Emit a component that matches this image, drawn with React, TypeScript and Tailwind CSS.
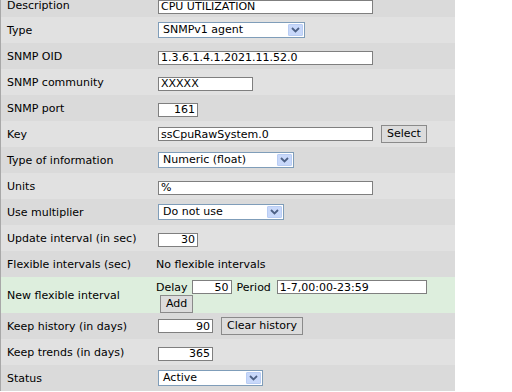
import React from "react"

const font = "font-['DejaVu_Sans',sans-serif]"

function TextBox({ value, w, right }: { value: string; w: string; right?: boolean }) {
  return (
    <input
      readOnly
      value={value}
      className={`${w} h-[14px] border border-[#7f7f7f] bg-white px-[2px] text-[11px] leading-[12px] text-black outline-none ${right ? "text-right" : ""}`}
    />
  )
}

function Dropdown({ value, w }: { value: string; w: string }) {
  return (
    <div className={`${w} flex h-[16px] items-center border border-[#7f9db9] bg-white`}>
      <span className="flex-1 pl-[4px] text-[11px] leading-[14px]">{value}</span>
      <span className="mr-[1px] flex h-[12px] w-[15px] items-center justify-center rounded-[1px] border border-[#b9cdf4] bg-[#c8d8fa]">
        <svg width="9" height="6" viewBox="0 0 9 6">
          <path d="M1 1 L4.5 4.5 L8 1" fill="none" stroke="#4d6185" strokeWidth="1.8" />
        </svg>
      </span>
    </div>
  )
}

function Btn({ label }: { label: string }) {
  return (
    <span className="inline-flex h-[18px] items-center border border-[#8a8a8a] bg-[#dcdcdc] px-[5px] text-[11px] leading-[14px]">
      {label}
    </span>
  )
}

function Row({ label, dark, children, h = "h-[26px]", green }: { label: string; dark?: boolean; children: React.ReactNode; h?: string; green?: boolean }) {
  const bg = green ? "bg-[#ddeedd]" : dark ? "bg-[#dadada]" : "bg-[#e1e1e1]"
  return (
    <div className={`flex ${h} items-center ${bg}`}>
      <div className="w-[155px] shrink-0 pl-[6px] pt-[3px] text-[11px]">{label}</div>
      <div className="flex flex-1 items-center">{children}</div>
    </div>
  )
}

export default function App() {
  return (
    <div className={`${font} h-[392px] w-[512px] overflow-hidden bg-white text-black`}>
      <div className="-mt-[7px] w-[455px] border-l border-[#a8a8a8]">
        <Row label="Description" dark h="h-[24px]">
          <span className="pl-[2px]"><TextBox value="CPU UTILIZATION" w="w-[215px]" /></span>
        </Row>
        <Row label="Type">
          <span className="pl-[2px]"><Dropdown value="SNMPv1 agent" w="w-[147px]" /></span>
        </Row>
        <Row label="SNMP OID" dark>
          <span className="pl-[2px]"><TextBox value="1.3.6.1.4.1.2021.11.52.0" w="w-[215px]" /></span>
        </Row>
        <Row label="SNMP community">
          <span className="pl-[2px]"><TextBox value="XXXXX" w="w-[95px]" /></span>
        </Row>
        <Row label="SNMP port" dark>
          <span className="pl-[2px]"><TextBox value="161" w="w-[40px]" right /></span>
        </Row>
        <Row label="Key">
          <span className="flex items-center gap-[8px] pl-[2px]">
            <TextBox value="ssCpuRawSystem.0" w="w-[215px]" />
            <Btn label="Select" />
          </span>
        </Row>
        <Row label="Type of information" dark>
          <span className="pl-[2px]"><Dropdown value="Numeric (float)" w="w-[136px]" /></span>
        </Row>
        <Row label="Units">
          <span className="pl-[2px]"><TextBox value="%" w="w-[215px]" /></span>
        </Row>
        <Row label="Use multiplier" dark>
          <span className="pl-[2px]"><Dropdown value="Do not use" w="w-[126px]" /></span>
        </Row>
        <Row label="Update interval (in sec)">
          <span className="pl-[2px]"><TextBox value="30" w="w-[40px]" right /></span>
        </Row>
        <Row label="Flexible intervals (sec)" dark>
          <span className="pt-[3px] text-[11px]">No flexible intervals</span>
        </Row>
        <Row label="New flexible interval" h="h-[36px]" green>
          <div className="flex h-[36px] flex-col justify-start gap-[1px] pt-[3px]">
            <div className="flex h-[14px] items-center text-[11px] leading-[14px]">
              <span className="mr-[4px] pt-[1px]">Delay</span>
              <TextBox value="50" w="w-[40px]" right />
              <span className="ml-[5px] mr-[6px] pt-[1px]">Period</span>
              <TextBox value="1-7,00:00-23:59" w="w-[150px]" />
            </div>
            <div className="flex pl-[4px]"><Btn label="Add" /></div>
          </div>
        </Row>
        <Row label="Keep history (in days)" dark>
          <span className="flex items-center gap-[8px] pl-[2px]">
            <TextBox value="90" w="w-[55px]" right />
            <Btn label="Clear history" />
          </span>
        </Row>
        <Row label="Keep trends (in days)">
          <span className="pl-[2px]"><TextBox value="365" w="w-[55px]" right /></span>
        </Row>
        <Row label="Status" dark>
          <span className="pl-[2px]"><Dropdown value="Active" w="w-[105px]" /></span>
        </Row>
      </div>
    </div>
  )
}
